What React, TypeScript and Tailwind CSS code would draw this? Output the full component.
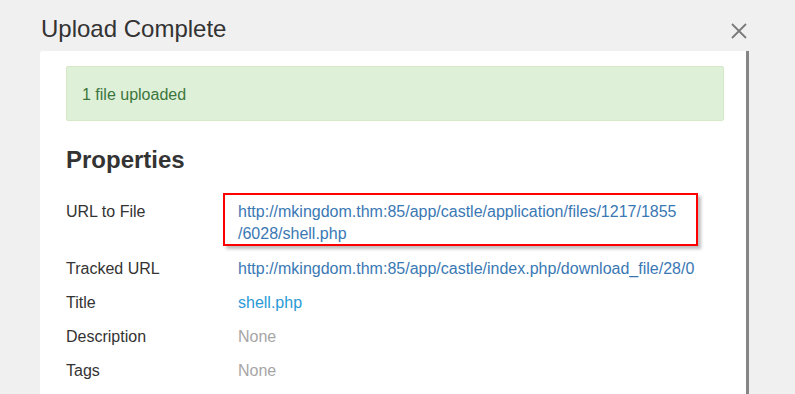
const rows = [
  { label: "Tracked URL", value: "http://mkingdom.thm:85/app/castle/index.php/download_file/28/0", kind: "url" },
  { label: "Title", value: "shell.php", kind: "title" },
  { label: "Description", value: "None", kind: "none" },
  { label: "Tags", value: "None", kind: "none" },
];

const valueColor: Record<string, string> = {
  url: "text-[#3a78b4]",
  title: "text-[#2a9ad6]",
  none: "text-[#a6a6a6]",
};

export default function App() {
  return (
    <div className="h-[394px] w-[795px] overflow-hidden bg-[#f0f0f0] font-['Liberation_Sans',Arial,sans-serif]">
      <div className="flex h-[51px] w-[749px] items-start justify-between pl-[41px]">
        <h1 className="pt-[16px] text-[24px] leading-[26px] text-[#333]">Upload Complete</h1>
        <svg width="18" height="18" viewBox="0 0 18 18" className="mt-[22px] mr-[1px]">
          <path d="M2 2 L16 16 M16 2 L2 16" stroke="#7a7a7a" strokeWidth="1.8" fill="none" />
        </svg>
      </div>

      <div className="ml-[40px] h-[343px] w-[709px] rounded-tl-[3px] border-r-[3px] border-[#858585] bg-white pt-[15px] pl-[26px]">
        <div className="flex h-[55px] w-[658px] items-center rounded-[2px] border border-[#d6e9c6] bg-[#dff0d8] px-[15px] pt-[2px] text-[16px] leading-[22px] text-[#3c763d]">
          1 file uploaded
        </div>

        <h2 className="mt-[25px] text-[24px] leading-[28px] font-bold text-[#333]">Properties</h2>

        <div className="mt-[27px] flex flex-col gap-[12px] text-[16px] leading-[22px]">
          <div className="mb-[1px] flex">
            <div className="w-[172px] text-[#333]">URL to File</div>
            <div className="relative text-[#3a78b4]">
              http://mkingdom.thm:85/app/castle/application/files/1217/1855
              <br />
              /6028/shell.php
              <div className="pointer-events-none absolute top-[-8px] left-[-15px] h-[53px] w-[475px] border-2 border-[#ff0000] shadow-[3px_3px_3px_rgba(0,0,0,0.25)]" />
            </div>
          </div>
          {rows.map((r) => (
            <div key={r.label} className="flex">
              <div className="w-[172px] text-[#333]">{r.label}</div>
              <div className={valueColor[r.kind]}>{r.value}</div>
            </div>
          ))}
        </div>
      </div>
    </div>
  );
}
